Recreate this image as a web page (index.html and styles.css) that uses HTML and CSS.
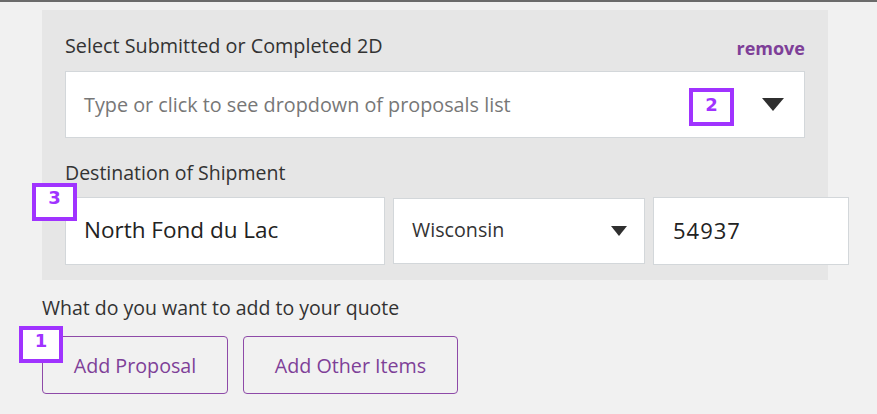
FILE: index.html
```html
<!DOCTYPE html>
<html>
<head>
<meta charset="utf-8">
<link rel="stylesheet" href="styles.css">
</head>
<body>
<div class="page">
  <section class="panel">
    <div class="label-row">
      <span class="label label-select">Select Submitted or Completed 2D</span>
      <span class="remove">remove</span>
    </div>
    <div class="proposal-select">
      <span class="placeholder">Type or click to see dropdown of proposals list</span>
      <span class="caret caret-lg"></span>
      <span class="badge badge-2">2</span>
    </div>
    <div class="label dest-label">Destination of Shipment</div>
    <div class="dest-row">
      <div class="field city">North Fond du Lac</div>
      <div class="field state"><span>Wisconsin</span><span class="caret caret-sm"></span></div>
      <div class="field zip">54937</div>
      <span class="badge badge-3">3</span>
    </div>
  </section>
  <div class="label add-label">What do you want to add to your quote</div>
  <div class="buttons">
    <button class="btn btn-proposal">Add Proposal</button>
    <button class="btn btn-other">Add Other Items</button>
    <span class="badge badge-1">1</span>
  </div>
</div>
</body>
</html>
```

FILE: styles.css
```css
html, body {
  margin: 0;
  padding: 0;
}
body {
  background: #f1f1f1;
  border-top: 2px solid #6b6b6b;
  font-family: "Open Sans", "Lato", sans-serif;
  color: #333;
  width: 877px;
  height: 412px;
  overflow: hidden;
}
.page {
  padding-left: 42px;
  padding-top: 8px;
}
.panel {
  width: 740px;
  background: #e6e6e6;
  padding: 24px 23px 15px 23px;
}
.label-row {
  display: flex;
  justify-content: space-between;
  align-items: center;
  height: 24px;
}
.label {
  font-size: 19.5px;
  line-height: 24px;
  color: #333;
}
.label-select {
  font-size: 19.8px;
}
.remove {
  font-size: 18px;
  font-weight: 700;
  color: #7e3f98;
  padding-top: 3px;
}
.proposal-select {
  position: relative;
  margin-top: 13px;
  height: 65px;
  background: #fff;
  border: 1px solid #d3d7da;
  display: flex;
  align-items: center;
  justify-content: space-between;
  padding: 0 20px 0 18px;
}
.placeholder {
  font-size: 19.8px;
  color: #777;
}
.caret {
  width: 0;
  height: 0;
  border-left-style: solid;
  border-right-style: solid;
  border-top-style: solid;
  border-left-color: transparent;
  border-right-color: transparent;
  border-top-color: #2f2f2f;
}
.caret-lg {
  border-left-width: 11.5px;
  border-right-width: 11.5px;
  border-top-width: 13px;
}
.caret-sm {
  border-left-width: 8px;
  border-right-width: 8px;
  border-top-width: 10px;
  margin-top: 3px;
}
.dest-label {
  margin-top: 23px;
}
.dest-row {
  position: relative;
  display: flex;
  align-items: center;
  gap: 8px;
  margin-top: 12px;
  width: 784px;
}
.field {
  background: #fff;
  border: 1px solid #d3d7da;
  box-sizing: border-box;
  display: flex;
  align-items: center;
  padding-bottom: 3px;
}
.city {
  width: 320px;
  height: 68px;
  padding-left: 18px;
  font-size: 22.5px;
  color: #222;
}
.state {
  width: 252px;
  height: 66px;
  padding-left: 18px;
  padding-right: 17px;
  justify-content: space-between;
  font-size: 19.7px;
  color: #333;
}
.zip {
  width: 196px;
  height: 68px;
  padding-left: 19px;
  font-size: 22px;
  letter-spacing: 1px;
  color: #222;
}
.add-label {
  margin-top: 16px;
}
.buttons {
  position: relative;
  display: flex;
  gap: 15px;
  margin-top: 16px;
}
.btn {
  height: 58px;
  background: transparent;
  border: 1.5px solid #8e4aa8;
  border-radius: 4px;
  color: #7e3f98;
  font-family: "Open Sans", "Lato", sans-serif;
  font-size: 19.7px;
  padding: 0;
}
.btn-proposal {
  width: 186px;
}
.btn-other {
  width: 215px;
}
.badge {
  position: absolute;
  box-sizing: border-box;
  width: 45px;
  height: 38px;
  background: #fff;
  border: 4px solid #a033ff;
  color: #a033ff;
  font-family: "DejaVu Sans", sans-serif;
  font-weight: 700;
  font-size: 18px;
  line-height: 22px;
  text-align: center;
}
.badge-2 {
  left: 623px;
  top: 16px;
  padding-top: 2px;
}
.badge-3 {
  left: -33px;
  top: -14px;
}
.badge-1 {
  left: -23px;
  top: -10px;
  width: 44px;
  height: 37px;
}
```
